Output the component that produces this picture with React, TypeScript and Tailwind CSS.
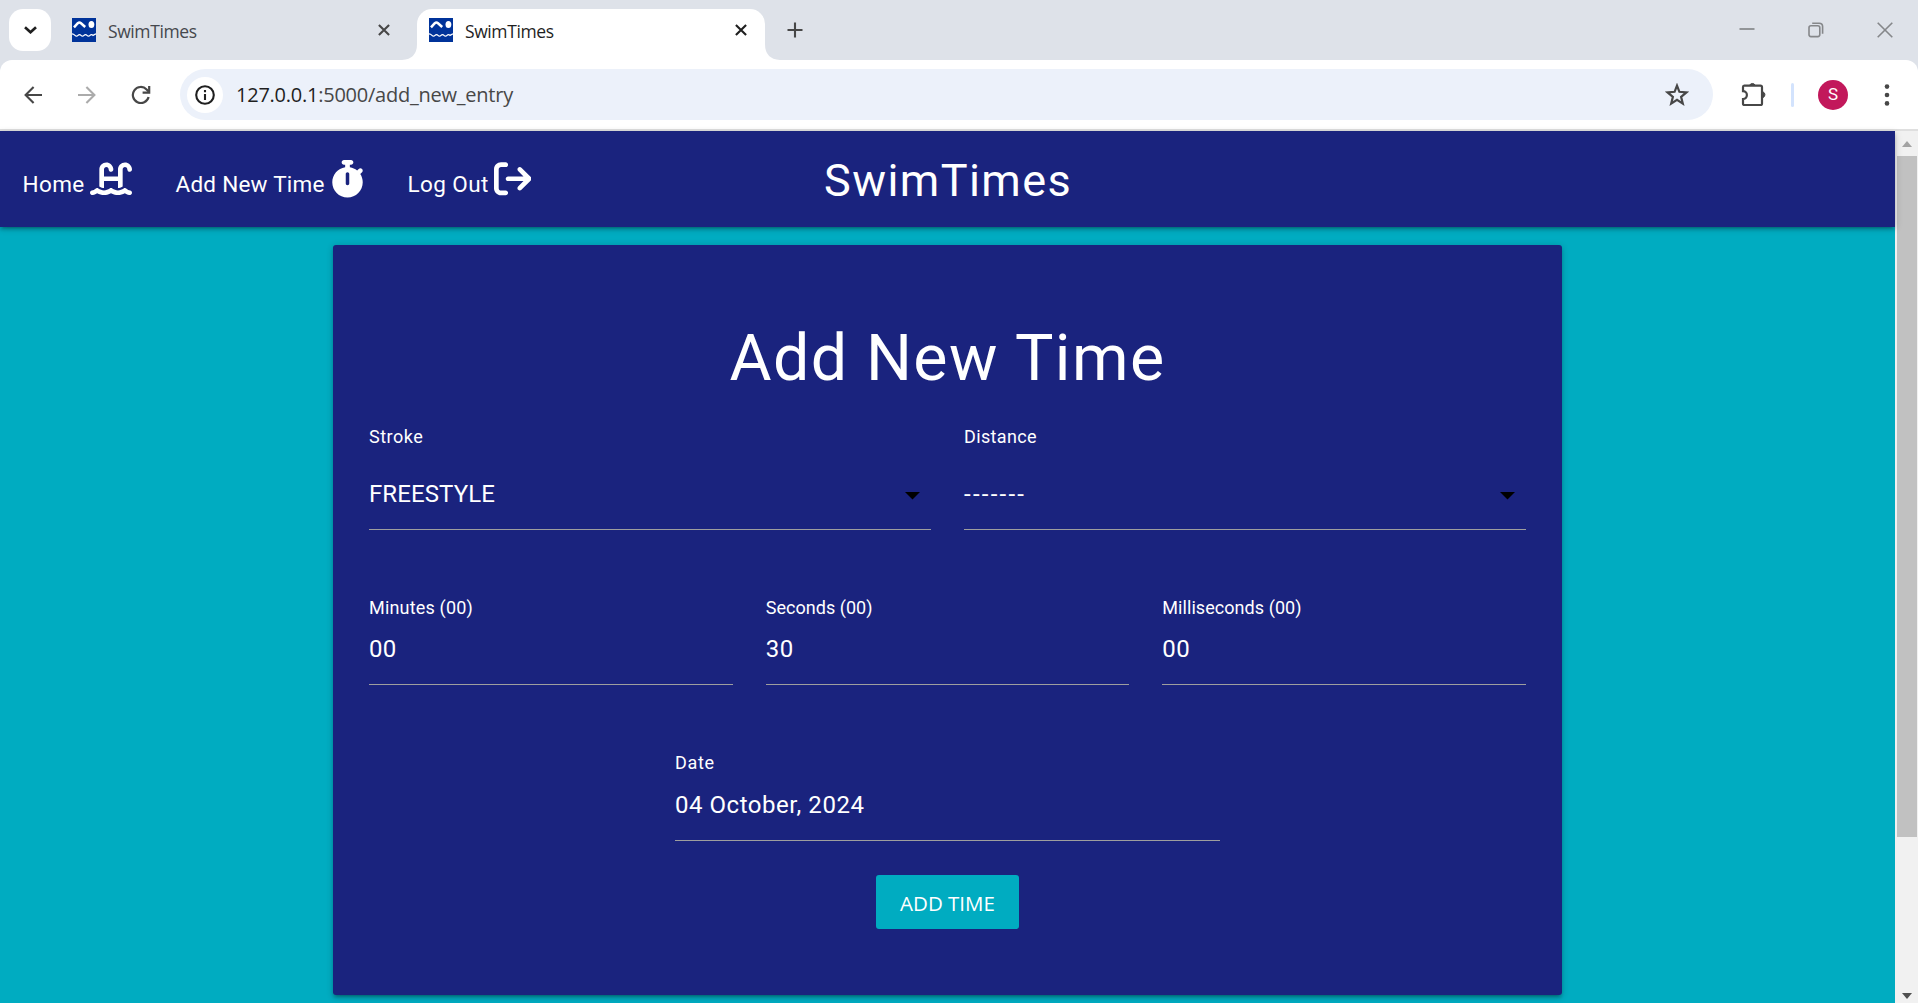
import React from "react";
import { FaArrowRightFromBracket, FaStopwatch, FaWaterLadder } from "react-icons/fa6";

function Favicon() {
  return (
    <svg className="h-6 w-6 shrink-0" viewBox="0 0 24 24" fill="none">
      <rect width="24" height="24" fill="#00339a" />
      <path d="M2 9.4 5.8 5.2Q7.4 3.8 9 5.2L13.2 9" stroke="#fff" strokeWidth="2.5" />
      <ellipse cx="19.4" cy="6.6" rx="2.9" ry="3.5" fill="#fff" />
      <path
        d="M0 15.8Q1.5 15.8 3 17.4T6 17.4 9 17.4 12 17.4 15 17.4 18 17.4 21 17.4L24 15.8"
        stroke="#fff"
        strokeWidth="1.3"
      />
    </svg>
  );
}

function TabClose({ color }: { color: string }) {
  return (
    <svg className="h-3 w-3 shrink-0" viewBox="0 0 12 12" fill="none" stroke={color} strokeWidth="2.1">
      <path d="M.9.9 11.1 11.1M11.1.9.9 11.1" />
    </svg>
  );
}

function TabStrip() {
  return (
    <div className="flex h-[60px] items-start bg-[#dee2e9] font-['Open_Sans',sans-serif]">
      <div className="mt-[9px] ml-[9px] flex h-[42px] w-[42px] items-center justify-center rounded-[14px] bg-white">
        <svg className="h-[8px] w-[13px]" viewBox="0 0 13 8" fill="none" stroke="#1f1f1f" strokeWidth="2.6">
          <path d="M1 1.2 6.5 6.3 12 1.2" />
        </svg>
      </div>
      <div className="ml-[21px] flex h-[60px] w-[318px] items-center">
        <Favicon />
        <span className="mt-[2px] ml-[12px] h-[24px] text-[17.5px] leading-[24px] tracking-[-0.4px] text-[#45484d]">SwimTimes</span>
        <span className="ml-auto">
          <TabClose color="#474747" />
        </span>
      </div>
      <svg className="ml-[12px] h-[60px] w-[15px]" viewBox="0 0 15 60">
        <path d="M15 44V60H0Q15 59 15 44Z" fill="#fff" />
      </svg>
      <div className="mt-[9px] flex h-[51px] w-[348px] items-center rounded-t-[15px] bg-white pr-[18px] pb-[9px] pl-[12px]">
        <Favicon />
        <span className="mt-[2px] ml-[12px] h-[24px] text-[17.5px] leading-[24px] tracking-[-0.4px] text-[#1f1f1f]">SwimTimes</span>
        <span className="ml-auto">
          <TabClose color="#1f1f1f" />
        </span>
      </div>
      <svg className="h-[60px] w-[15px]" viewBox="0 0 15 60">
        <path d="M0 44V60H15Q0 59 0 44Z" fill="#fff" />
      </svg>
      <svg className="mt-[22px] ml-[7px] h-4 w-4" viewBox="0 0 16 16" stroke="#474747" strokeWidth="2.1">
        <path d="M8 .5V15.5M.5 8H15.5" />
      </svg>
      <div className="mt-[22px] ml-auto flex gap-[53px] pr-[25px]">
        <svg className="h-4 w-4" viewBox="0 0 16 16" stroke="#85878a" strokeWidth="1.7">
          <path d="M.5 7H15.5" />
        </svg>
        <svg className="h-4 w-4" viewBox="0 0 16 16" fill="none" stroke="#85878a" strokeWidth="1.6">
          <rect x="1" y="3.8" width="10.8" height="10.8" rx="2" />
          <path d="M4.2 1.2H11.2Q14.6 1.2 14.6 4.6V11.8" />
        </svg>
        <svg className="h-4 w-4" viewBox="0 0 16 16" stroke="#85878a" strokeWidth="1.6">
          <path d="M.7.7 15.3 15.3M15.3.7.7 15.3" />
        </svg>
      </div>
    </div>
  );
}

function Toolbar() {
  return (
    <div className="bg-[#dee2e9]">
      <div className="flex h-[71px] items-center rounded-t-[12px] border-b-2 border-[#dfdfdf] bg-white">
        <svg className="ml-[24px] h-[18px] w-[18px]" viewBox="0 0 18 18" fill="none" stroke="#474747" strokeWidth="2.1">
          <path d="M18 9H1.6M9.6 1 1.6 9 9.6 17" />
        </svg>
        <svg className="ml-[36px] h-[18px] w-[18px]" viewBox="0 0 18 18" fill="none" stroke="#ababab" strokeWidth="2.1">
          <path d="M0 9H16.4M8.4 1 16.4 9 8.4 17" />
        </svg>
        <svg className="ml-[35px] h-5 w-5" viewBox="0 0 20 20" fill="none" stroke="#474747" strokeWidth="2.2">
          <path d="M17.6 12A8 8 0 1 1 15.6 4.4L17.6 6.6" />
          <path d="M18.2 1V7.6H11.6" />
        </svg>
        <div className="ml-[29px] flex h-[51px] w-[1533px] items-center rounded-full bg-[#ecf1fa] pr-[24px] pl-[7px]">
          <div className="flex h-9 w-9 items-center justify-center rounded-full bg-white">
            <svg className="h-5 w-5" viewBox="0 0 20 20" fill="none" stroke="#1f1f1f" strokeWidth="2.1">
              <circle cx="10" cy="10" r="8.8" />
              <path d="M10 9V15M10 5V7.2" />
            </svg>
          </div>
          <span className="ml-[13px] h-[28px] font-['Open_Sans',sans-serif] text-[20px] leading-[28px] tracking-[-0.24px] text-[#474747]">
            <span className="text-[#1f1f1f]">127.0.0.1</span>:5000/add_new_entry
          </span>
          <svg className="ml-auto h-6 w-6" viewBox="0 0 24 24" fill="none" stroke="#474747" strokeWidth="2.2">
            <path d="M12 2.6 14.4 8.8 21.4 9.4 16.1 13.8 17.8 20.6 12 16.9 6.2 20.6 7.9 13.8 2.6 9.4 9.6 8.8Z" />
          </svg>
        </div>
        <svg className="ml-[28px] h-[26px] w-[26px]" viewBox="0 0 26 26">
          <path d="M8.6 3.4A3 3 0 0 1 14.2 3.4ZM22 9.9A3 3 0 0 1 22 15.5Z" fill="#474747" stroke="#474747" />
          <path
            d="M3.2 3.6H19.4Q21 3.6 21 5.2V21.4Q21 23 19.4 23H3.6Q2 23 2 21.4V17A3.9 3.9 0 0 0 2 9.2V5Q2 3.6 3.2 3.6Z"
            fill="none"
            stroke="#474747"
            strokeWidth="2.2"
          />
        </svg>
        <div className="ml-[24px] h-[24px] w-[3px] rounded-full bg-[#d3e3fd]" />
        <div className="ml-[24px] flex h-[30px] w-[30px] items-center justify-center rounded-full bg-[#c2185b] font-['Roboto',sans-serif] text-[17px] text-white">
          S
        </div>
        <svg className="ml-[36px] h-[22px] w-[6px]" viewBox="0 0 6 22" fill="#474747">
          <circle cx="3" cy="2.6" r="2.3" />
          <circle cx="3" cy="11" r="2.3" />
          <circle cx="3" cy="19.4" r="2.3" />
        </svg>
      </div>
    </div>
  );
}

function NavBar() {
  return (
    <nav className="relative flex h-[96px] items-start bg-[#1a237e] pt-[29px] pl-[22.5px] text-[22.5px] leading-[48px] text-white shadow-[0_3px_3px_0_rgba(0,0,0,0.14),0_4.5px_1.5px_-3px_rgba(0,0,0,0.12),0_1.5px_7.5px_0_rgba(0,0,0,0.2)]">
      <a className="flex w-[153px]">
        <span className="w-[67px] tracking-[0.4px]">Home</span>
        <FaWaterLadder className="h-[37.5px] w-[42px]" />
      </a>
      <a className="flex w-[232px]">
        <span className="w-[155px] tracking-[0.25px]">Add New Time</span>
        <FaStopwatch className="h-[37.5px] w-[33px]" />
      </a>
      <a className="flex">
        <span className="w-[86px] tracking-[0.4px]">Log Out</span>
        <FaArrowRightFromBracket className="h-[37.5px] w-[37.5px]" />
      </a>
      <a className="absolute top-[20px] left-[824px] text-[45px] leading-[60px] tracking-[1.43px]">SwimTimes</a>
    </nav>
  );
}

function Label({ text, tracking }: { text: string; tracking: string }) {
  return <div className={`h-[24px] text-[18px] leading-[24px] ${tracking}`}>{text}</div>;
}

function SelectField({ label, labelTracking, value, tracking }: { label: string; labelTracking: string; value: string; tracking: string }) {
  return (
    <div>
      <Label text={label} tracking={labelTracking} />
      <div className="flex h-[81px] items-start justify-between border-b border-[#9e9e9e] pt-[30px] pr-[11px]">
        <span className={`text-[24px] leading-[30px] ${tracking}`}>{value}</span>
        <svg className="mt-[13px] h-[8px] w-[15px]" viewBox="0 0 15 8">
          <path d="M0 0H15L7.5 7.5Z" fill="#000" />
        </svg>
      </div>
    </div>
  );
}

function TextField({ label, labelTracking, value, tracking, box }: { label: string; labelTracking: string; value: string; tracking: string; box: string }) {
  return (
    <div>
      <Label text={label} tracking={labelTracking} />
      <div className={`border-b border-[#9e9e9e] text-[24px] leading-[30px] ${box} ${tracking}`}>{value}</div>
    </div>
  );
}

function EntryCard() {
  return (
    <main className="mx-auto mt-[18px] flex h-[750px] w-[1229px] flex-col rounded-[3px] bg-[#1a237e] px-[36px] pt-[74px] text-white shadow-[0_3px_3px_0_rgba(0,0,0,0.14),0_4.5px_1.5px_-3px_rgba(0,0,0,0.12),0_1.5px_7.5px_0_rgba(0,0,0,0.2)]">
      <h1 className="h-[78px] text-center text-[64.5px] leading-[78px] tracking-[1.4px]">Add New Time</h1>
      <div className="mt-[28px] grid grid-cols-2 gap-x-[33px]">
        <SelectField label="Stroke" labelTracking="tracking-[0.5px]" value="FREESTYLE" tracking="tracking-[0.1px]" />
        <SelectField label="Distance" labelTracking="tracking-[0.35px]" value="-------" tracking="tracking-[2.25px]" />
      </div>
      <div className="mt-[66px] grid grid-cols-3 gap-x-[33px]">
        <TextField label="Minutes (00)" labelTracking="tracking-[0.18px]" value="00" tracking="tracking-[0.3px]" box="h-[65px] pt-[14px]" />
        <TextField label="Seconds (00)" labelTracking="tracking-[0.04px]" value="30" tracking="tracking-[0.5px]" box="h-[65px] pt-[14px]" />
        <TextField label="Milliseconds (00)" labelTracking="tracking-[0.06px]" value="00" tracking="tracking-[0.5px]" box="h-[65px] pt-[14px]" />
      </div>
      <div className="mx-auto mt-[66px] w-[545px]">
        <TextField label="Date" labelTracking="tracking-[0.7px]" value="04 October, 2024" tracking="tracking-[0.54px]" box="h-[66px] pt-[15px]" />
      </div>
      <button className="mx-auto mt-[34px] h-[54px] w-[143px] rounded-[3px] bg-[#00acc1] pt-px font-['Open_Sans',sans-serif] text-[20.5px] leading-[52px]">
        ADD TIME
      </button>
    </main>
  );
}

function Scrollbar() {
  return (
    <div className="flex w-[23px] flex-col items-center bg-[#f1f1f1]">
      <svg className="mt-[10px] h-[6px] w-[10px]" viewBox="0 0 10 6">
        <path d="M0 6H10L5 0Z" fill="#a3a3a3" />
      </svg>
      <div className="mt-[9px] h-[681px] w-[20px] bg-[#c1c1c1]" />
      <svg className="mt-auto mb-[4px] h-[6px] w-[10px]" viewBox="0 0 10 6">
        <path d="M0 0H10L5 6Z" fill="#505050" />
      </svg>
    </div>
  );
}

export default function App() {
  return (
    <div className="flex h-[1003px] w-[1918px] flex-col overflow-hidden">
      <TabStrip />
      <Toolbar />
      <div className="flex flex-1">
        <div className="w-[1895px] bg-[#00acc1] font-['Roboto',sans-serif]">
          <NavBar />
          <EntryCard />
        </div>
        <Scrollbar />
      </div>
    </div>
  );
}
